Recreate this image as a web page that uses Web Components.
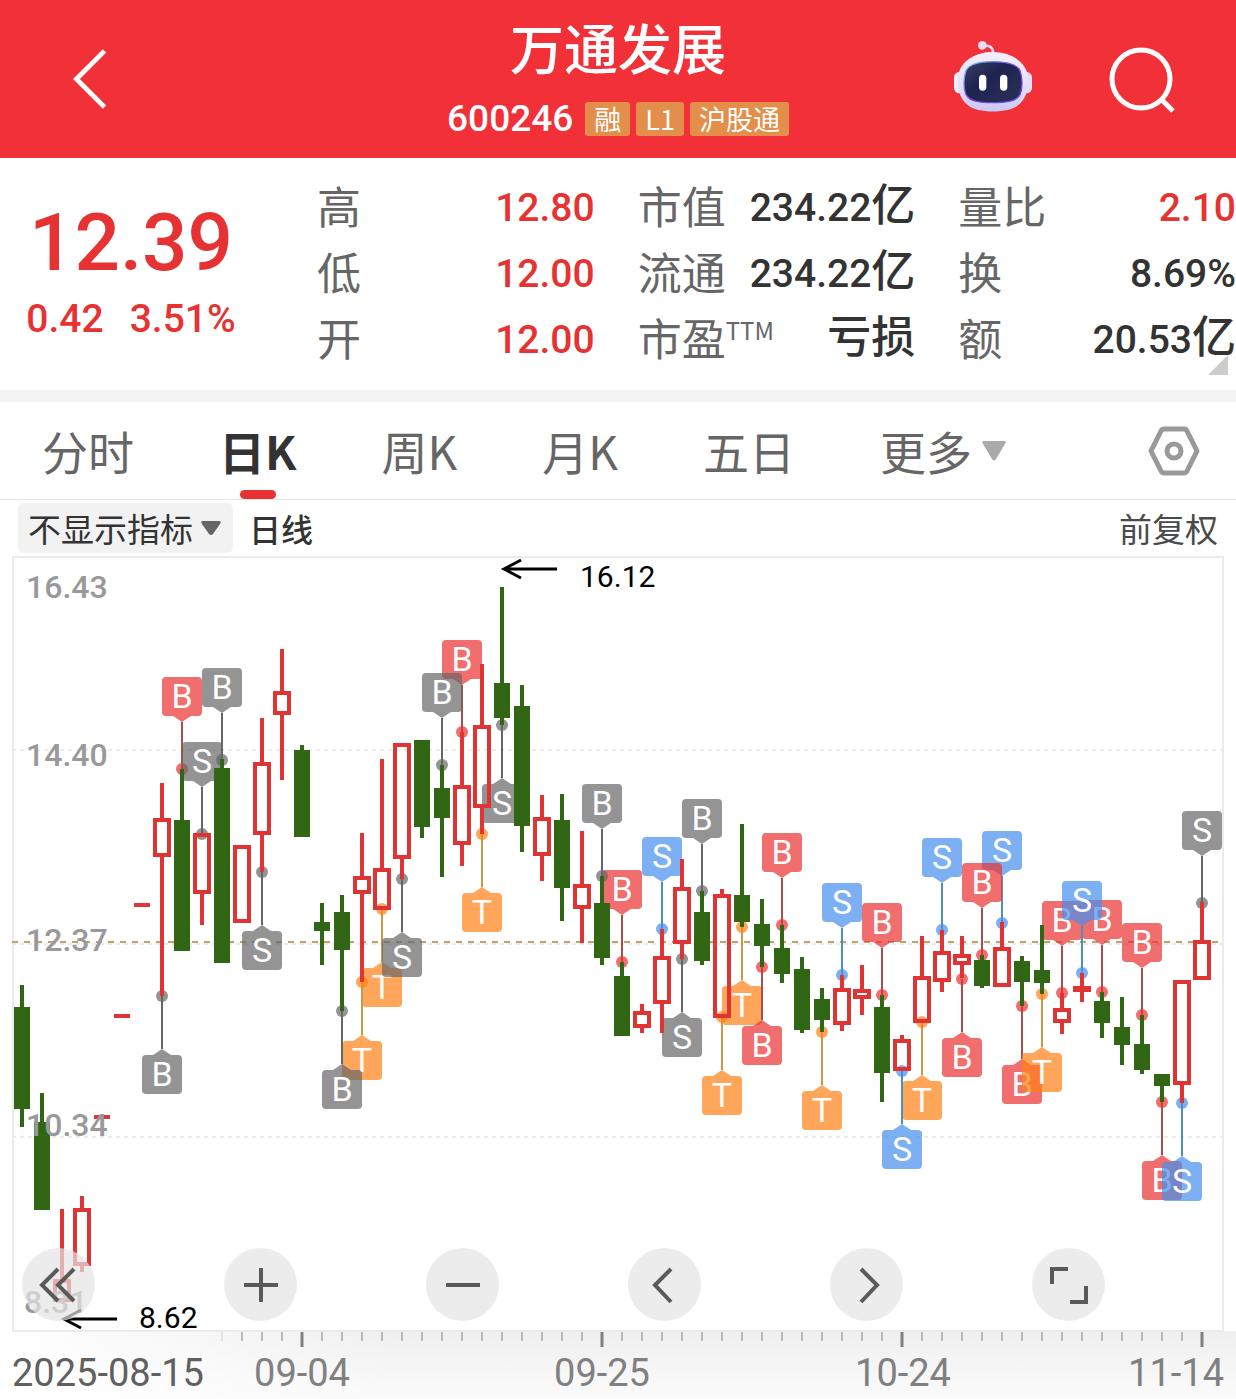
<!DOCTYPE html>
<html lang="zh-CN">
<head>
<meta charset="utf-8">
<meta name="viewport" content="width=device-width, initial-scale=1">
<title>万通发展 600246</title>
<style>
  body {
    margin: 0;
    background: #fff;
    color: #333;
    font-family: Roboto, "Noto Sans CJK SC", sans-serif;
    --up: #e63232;
    --label: #666;
    --num: Roboto, "Noto Sans CJK SC", sans-serif;
    --cjk: "Noto Sans CJK SC", sans-serif;
  }
</style>
</head>
<body>
<my-stock-app></my-stock-app>

<script>
/**
 * Creates a template element from markup.
 *
 * @param {string} html - The markup.
 * @returns {HTMLTemplateElement} The template.
 */
const createTemplate = html => {
  const template = document.createElement('template')
  template.innerHTML = html
  return template
}

/**
 * Base class that attaches an open shadow root with a cloned template.
 */
class BaseElement extends HTMLElement {
  /**
   * Creates an instance and fills the shadow root.
   */
  constructor () {
    super()
    this.attachShadow({ mode: 'open' })
    this.shadowRoot.appendChild(this.constructor.template.content.cloneNode(true))
  }
}

// ---- Small coloured tag beside the stock code ----
customElements.define('stock-tag', class extends BaseElement {
  static template = createTemplate(`
<style>
  :host {
    display: block;
    padding: 0 9px;
    border-radius: 3px;
    background: #e38e4a;
    color: #fff;
    font: 27px/34px var(--cjk);
  }
</style>
<slot></slot>
`)
})

// ---- Red top bar ----
customElements.define('stock-header', class extends BaseElement {
  static template = createTemplate(`
<style>
  :host {
    display: grid;
    grid-template-columns: 1fr auto 1fr;
    align-items: center;
    height: 158px;
    padding: 0 60px;
    background: #f23038;
    color: #fff;
  }
  button {
    display: block;
    padding: 0;
    border: 0;
    background: none;
    color: inherit;
  }
  svg { display: block; }
  .back { padding-left: 10px; }
  .middle { text-align: center; }
  h1 {
    margin: 0;
    font: 500 54px/78px var(--cjk);
  }
  .code {
    display: flex;
    align-items: center;
    justify-content: center;
    gap: 6px;
    padding: 16px 0 14px;
  }
  .code b {
    margin-right: 6px;
    font: 500 37px/34px Roboto, sans-serif;
  }
  .actions {
    display: flex;
    align-items: center;
    justify-content: flex-end;
    gap: 76px;
  }
  .robot { padding-bottom: 4px; }
</style>
<button class="back" aria-label="返回">
  <svg width="40" height="62" viewBox="0 0 40 64" fill="none" stroke="#fff" stroke-width="5"><path d="M35 3 6 32 35 61"/></svg>
</button>
<div class="middle">
  <h1><slot name="name"></slot></h1>
  <div class="code"><b><slot name="code"></slot></b><slot name="tags"></slot></div>
</div>
<div class="actions">
  <button class="robot" aria-label="助手">
    <svg width="78" height="74" viewBox="42 30 234 222">
      <defs>
        <linearGradient id="shell" x1="0" y1="0" x2="0" y2="1"><stop offset="0" stop-color="#f6effc"/><stop offset=".65" stop-color="#e2dcf8"/><stop offset="1" stop-color="#c9c6f0"/></linearGradient>
        <linearGradient id="rim" x1="0" y1="0" x2="1" y2="1"><stop offset="0" stop-color="#6fd0ea"/><stop offset=".5" stop-color="#7a3fe0"/><stop offset="1" stop-color="#5a50e8"/></linearGradient>
        <linearGradient id="face" x1="0" y1="0" x2="1" y2="1"><stop offset="0" stop-color="#3a3f66"/><stop offset=".4" stop-color="#1d2450"/><stop offset="1" stop-color="#2b3058"/></linearGradient>
      </defs>
      <path d="M132 47Q158 44 160 70" fill="none" stroke="#e6d8f4" stroke-width="8"/>
      <circle cx="127" cy="46" r="13" fill="#f0dcf2"/>
      <rect x="42" y="126" width="40" height="64" rx="16" fill="#f2f0ff"/>
      <rect x="236" y="126" width="40" height="64" rx="16" fill="#e4dcfa"/>
      <path d="M158 66C108 66 70 90 58 124 48 160 54 202 84 226 110 251 208 251 234 226 264 202 270 160 260 124 248 90 208 66 158 66Z" fill="url(#shell)"/>
      <path d="M158 95C116 95 88 102 78 122 70 144 70 176 78 194 90 216 124 218 158 218S228 216 240 194C248 176 248 144 240 122 230 102 200 95 158 95Z" fill="url(#face)" stroke="url(#rim)" stroke-width="4"/>
      <rect x="117" y="134" width="22" height="48" rx="11" fill="#fff"/>
      <rect x="180" y="134" width="22" height="48" rx="11" fill="#fff"/>
    </svg>
  </button>
  <button aria-label="搜索">
    <svg width="68" height="68" viewBox="0 0 68 68" fill="none" stroke="#fff" stroke-width="5"><circle cx="33" cy="34" r="29"/><path d="M53 54 65 66"/></svg>
  </button>
</div>
`)
})

// ---- Label and value pair ----
customElements.define('stat-item', class extends BaseElement {
  static template = createTemplate(`
<style>
  :host {
    display: flex;
    justify-content: space-between;
    height: 66px;
    white-space: nowrap;
  }
  .label { color: var(--label); font: 44px/60px var(--cjk); }
  .value { font: 500 39px/66px var(--num); }
  :host([up]) .value { color: var(--up); }
  ::slotted(sup) { font-size: 24px; line-height: 0; vertical-align: 16px; }
  ::slotted(i) { font: 500 44px/1px var(--cjk); }
</style>
<span class="label"><slot name="label"></slot></span>
<span class="value"><slot></slot></span>
`)
})

// ---- Price and key figures ----
customElements.define('stock-quote', class extends BaseElement {
  static template = createTemplate(`
<style>
  :host {
    position: relative;
    display: grid;
    grid-template-columns: 262px 1fr;
    gap: 55px;
    padding: 17px 0;
    border-bottom: 12px solid #f4f4f4;
  }
  .price {
    padding-top: 22px;
    color: var(--up);
    font-family: var(--num);
    font-weight: 500;
    text-align: center;
  }
  .last { font-size: 80px; line-height: 92px; }
  .change {
    display: flex;
    justify-content: center;
    gap: 26px;
    font-size: 39px;
    line-height: 60px;
  }
  .stats {
    display: grid;
    grid-template-columns: repeat(3, 1fr);
    column-gap: 43px;
  }
  .corner {
    position: absolute;
    right: 8px;
    bottom: 15px;
    width: 20px;
    height: 20px;
    background: #ccc;
    clip-path: polygon(100% 0, 100% 100%, 0 100%);
  }
</style>
<div class="price">
  <div class="last">12.39</div>
  <div class="change"><span>0.42</span><span>3.51%</span></div>
</div>
<div class="stats">
  <stat-item up><span slot="label">高</span>12.80</stat-item>
  <stat-item><span slot="label">市值</span>234.22<i>亿</i></stat-item>
  <stat-item up><span slot="label">量比</span>2.10</stat-item>
  <stat-item up><span slot="label">低</span>12.00</stat-item>
  <stat-item><span slot="label">流通</span>234.22<i>亿</i></stat-item>
  <stat-item><span slot="label">换</span>8.69%</stat-item>
  <stat-item up><span slot="label">开</span>12.00</stat-item>
  <stat-item><span slot="label">市盈</span><sup slot="label">TTM</sup><i>亏损</i></stat-item>
  <stat-item><span slot="label">额</span>20.53<i>亿</i></stat-item>
</div>
<span class="corner"></span>
`)
})

// ---- Period tabs ----
customElements.define('period-tabs', class extends BaseElement {
  static template = createTemplate(`
<style>
  :host {
    display: flex;
    align-items: center;
    gap: 85px;
    height: 97px;
    padding: 0 36px 0 42px;
    border-bottom: 1px solid #e6e6e6;
  }
  button {
    position: relative;
    display: flex;
    align-items: center;
    gap: 10px;
    height: 97px;
    padding: 0;
    border: 0;
    background: none;
    color: var(--label);
    font: 46px/97px var(--cjk);
    white-space: nowrap;
  }
  button.active { color: #333; font-weight: 700; }
  button.active::after {
    content: "";
    position: absolute;
    left: 50%;
    bottom: 0;
    width: 36px;
    height: 9px;
    margin-left: -18px;
    border-radius: 5px;
    background: var(--up);
  }
  .settings { margin-left: auto; }
</style>
<button>分时</button>
<button class="active">日K</button>
<button>周K</button>
<button>月K</button>
<button>五日</button>
<button aria-haspopup="true">更多<svg width="24" height="20" viewBox="0 0 24 20"><path d="M2 0H22Q25 0 23 3L14 18Q12 21 10 18L1 3Q-1 0 2 0Z" fill="#aaa"/></svg></button>
<button class="settings" aria-label="设置">
  <svg width="52" height="50" viewBox="0 0 52 50" fill="none" stroke="#999" stroke-width="5" stroke-linejoin="round"><path d="M16 3H36Q38 3 39 5L49 25 39 45Q38 47 36 47H16Q14 47 13 45L3 25 13 5Q14 3 16 3Z"/><circle cx="26" cy="25" r="7"/></svg>
</button>
`)
})

// ---- Indicator selection ----
customElements.define('indicator-bar', class extends BaseElement {
  static template = createTemplate(`
<style>
  :host {
    display: flex;
    align-items: center;
    gap: 16px;
    padding: 3px 18px;
    font-family: var(--cjk);
  }
  label { position: relative; display: block; }
  select {
    display: block;
    width: 215px;
    height: 50px;
    padding: 0 10px;
    border: 0;
    border-radius: 6px;
    background: #f2f2f2;
    color: #333;
    font: 33px/50px var(--cjk);
    appearance: none;
  }
  label svg {
    position: absolute;
    right: 12px;
    top: 18px;
    pointer-events: none;
  }
  b { font: 500 32px/50px var(--cjk); }
  .adjust {
    margin-left: auto;
    padding: 0;
    border: 0;
    background: none;
    color: #4a4a4a;
    font: 33px/50px var(--cjk);
  }
</style>
<label>
  <select aria-label="指标"><option>不显示指标</option></select>
  <svg width="20" height="14" viewBox="0 0 20 14"><path d="M2 0H18Q21 0 19 3L12 13Q10 15 8 13L1 3Q-1 0 2 0Z" fill="#666"/></svg>
</label>
<b>日线</b>
<button class="adjust">前复权</button>
`)
})

// Candles as [direction, high, body top, body bottom, low].
const candles = [
  ['d', 985, 1007, 1109, 1127], ['d', 1093, 1122, 1210, 1210], ['u', 1209, 1279, 1302, 1302],
  ['u', 1196, 1208, 1266, 1272], ['-', 1115, 1115, 1119, 1119], ['-', 1014, 1014, 1018, 1018],
  ['-', 903, 903, 907, 907], ['u', 783, 818, 857, 996], ['d', 769, 820, 951, 951],
  ['u', 833, 833, 894, 925], ['d', 759, 768, 963, 963], ['u', 845, 845, 923, 923],
  ['u', 718, 762, 835, 872], ['u', 649, 691, 715, 780], ['d', 745, 750, 837, 837],
  ['d', 903, 922, 931, 965], ['d', 895, 912, 950, 1011], ['u', 833, 876, 894, 982],
  ['u', 759, 868, 910, 910], ['u', 743, 743, 859, 879], ['d', 740, 740, 827, 838],
  ['d', 765, 788, 818, 877], ['u', 732, 785, 845, 866], ['u', 664, 725, 808, 834],
  ['d', 587, 683, 718, 725], ['d', 685, 706, 826, 852], ['u', 795, 817, 856, 881],
  ['d', 794, 820, 888, 921], ['u', 831, 884, 909, 943], ['d', 876, 903, 958, 965],
  ['d', 962, 976, 1036, 1036], ['u', 1004, 1011, 1028, 1033], ['u', 929, 956, 1004, 1033],
  ['u', 859, 887, 944, 959], ['d', 891, 912, 961, 965], ['u', 889, 894, 1018, 1018],
  ['d', 824, 895, 922, 927], ['d', 899, 924, 946, 967], ['d', 925, 948, 974, 983],
  ['d', 957, 969, 1030, 1033], ['d', 988, 999, 1020, 1032], ['u', 975, 988, 1025, 1031],
  ['u', 965, 989, 999, 1015], ['d', 995, 1007, 1073, 1102], ['u', 1035, 1039, 1071, 1071],
  ['u', 936, 976, 1023, 1023], ['u', 930, 951, 982, 992], ['u', 936, 954, 965, 978],
  ['d', 955, 960, 986, 988], ['u', 922, 947, 987, 987], ['d', 956, 961, 982, 1006],
  ['d', 925, 970, 983, 994], ['u', 993, 1008, 1023, 1034], ['u', 973, 986, 992, 1002],
  ['d', 992, 1001, 1023, 1038], ['d', 997, 1027, 1045, 1065], ['d', 1015, 1044, 1070, 1074],
  ['d', 1074, 1074, 1086, 1102], ['u', 980, 980, 1085, 1103], ['u', 902, 940, 980, 980]
]

// Trade marks as [candle index, letter, colour, dot y, side]. Later ones lie on top.
const marks = [
  [36, 'T', 'orange', 927, 'below'],
  [8, 'B', 'red', 769, 'above'], [22, 'B', 'red', 732, 'above'], [30, 'B', 'red', 962, 'above'],
  [37, 'B', 'red', 967, 'below'], [38, 'B', 'red', 925, 'above'], [43, 'B', 'red', 995, 'above'],
  [47, 'B', 'red', 979, 'below'], [50, 'B', 'red', 1006, 'below'], [52, 'B', 'red', 993, 'above'],
  [54, 'B', 'red', 992, 'above'], [56, 'B', 'red', 1015, 'above'], [57, 'B', 'red', 1102, 'below'],
  [18, 'T', 'orange', 909, 'below'], [17, 'T', 'orange', 982, 'below'], [23, 'T', 'orange', 834, 'below'],
  [35, 'T', 'orange', 1017, 'below'], [40, 'T', 'orange', 1032, 'below'], [45, 'T', 'orange', 1022, 'below'],
  [51, 'T', 'orange', 994, 'below'],
  [32, 'S', 'blue', 929, 'above'], [41, 'S', 'blue', 975, 'above'], [44, 'S', 'blue', 1071, 'below'],
  [46, 'S', 'blue', 930, 'above'], [49, 'S', 'blue', 923, 'above'], [53, 'S', 'blue', 973, 'above'],
  [58, 'S', 'blue', 1103, 'below'],
  [48, 'B', 'red', 955, 'above'],
  [7, 'B', 'gray', 996, 'below'], [9, 'S', 'gray', 834, 'above'], [10, 'B', 'gray', 760, 'above'],
  [12, 'S', 'gray', 872, 'below'], [16, 'B', 'gray', 1011, 'below'], [19, 'S', 'gray', 879, 'below'],
  [21, 'B', 'gray', 765, 'above'], [24, 'S', 'gray', 725, 'below'], [29, 'B', 'gray', 876, 'above'],
  [33, 'S', 'gray', 959, 'below'], [34, 'B', 'gray', 891, 'above'], [59, 'S', 'gray', 903, 'above']
]

const candleX = i => 22 + i * 20

/**
 * Draws one candle.
 *
 * @param {Array} candle - The candle.
 * @param {number} i - The index.
 * @returns {string} SVG markup.
 */
const drawCandle = ([dir, high, top, bottom, low], i) => {
  const x = candleX(i)
  if (dir === '-') {
    return `<rect class="up-fill" x="${x - 8}" y="${top}" width="16" height="4"/>`
  }
  if (dir === 'd') {
    return `<g class="down"><rect x="${x - 2}" y="${high}" width="4" height="${low - high}"/><rect x="${x - 8}" y="${top}" width="16" height="${bottom - top}"/></g>`
  }
  return `<path class="up" d="M${x} ${high}V${top}M${x} ${bottom}V${low}M${x - 7} ${top + 2}H${x + 7}V${bottom - 2}H${x - 7}Z"/>`
}

/**
 * Draws one trade mark: dot, stem, pointed badge and letter.
 *
 * @param {Array} mark - The mark.
 * @returns {string} SVG markup.
 */
const drawMark = ([i, letter, color, y, side]) => {
  const x = candleX(i)
  const above = side === 'above'
  const top = above ? y - 92 : y + 59
  const edge = above ? top + 39 : top
  const tip = above ? edge + 6 : edge - 6
  return `<g class="${color}">
    <path class="stem" d="M${x} ${y}V${tip}"/>
    <circle cx="${x}" cy="${y}" r="6"/>
    <rect x="${x - 20}" y="${top}" width="40" height="39" rx="4"/>
    <path class="tip" d="M${x - 9} ${edge}L${x} ${tip} ${x + 9} ${edge}Z"/>
    <text x="${x}" y="${top + 31}">${letter}</text>
  </g>`
}

/**
 * Draws the date ruler ticks.
 *
 * @returns {string} SVG markup.
 */
const drawTicks = () => {
  let out = ''
  for (let i = 10; i < 60; i++) {
    const major = (i - 14) % 15 === 0
    out += `<path d="M${candleX(i)} 1332v${major ? 15 : 9}" stroke="${i === 10 ? '#ccc' : '#808080'}" stroke-width="${major ? 3 : 1}"/>`
  }
  return out
}

// ---- Candlestick chart ----
customElements.define('k-line-chart', class extends BaseElement {
  static template = createTemplate(`
<style>
  :host { display: block; position: relative; }
  svg { display: block; width: 100%; height: auto; }
  .frame { fill: none; stroke: #ebebeb; stroke-width: 2; }
  .grid { stroke: #ebebeb; stroke-width: 2; stroke-dasharray: 4 4; }
  .current { stroke: #bfa36a; stroke-width: 2; stroke-dasharray: 6 6; }
  .down { fill: #306614; }
  .up { fill: none; stroke: #e03434; stroke-width: 4; }
  .up-fill { fill: #dc3636; }
  .stem { stroke-width: 2; }
  .marks circle, .marks rect, .marks .tip { fill-opacity: .7; }
  .red { fill: #ea3030; } .red .stem { stroke: #a05050; }
  .gray { fill: #666; } .gray .stem { stroke: #666; }
  .blue { fill: #448eec; } .blue .stem { stroke: #5090b0; }
  .orange { fill: #ff8016; } .orange .stem { stroke: #c89a48; }
  .marks text { fill: #fff; font: 34px Roboto, sans-serif; text-anchor: middle; }
  .scale { fill: #999; font: 500 32px var(--num); }
  .extreme text { font: 30px Roboto, sans-serif; }
  .extreme path { fill: none; stroke: #000; stroke-width: 3; }
  .dates { fill: #808080; font: 38px Roboto, sans-serif; }
  .toolbar {
    position: absolute;
    left: 22px;
    right: 2px;
    bottom: 78px;
    display: grid;
    grid-template-columns: repeat(6, 1fr);
  }
  .toolbar button {
    display: grid;
    place-items: center;
    width: 73px;
    height: 73px;
    padding: 0;
    border: 0;
    border-radius: 50%;
    background: rgba(228, 228, 228, .7);
  }
  .toolbar svg {
    width: 40px;
    height: 40px;
    fill: none;
    stroke: #5a5a5a;
    stroke-width: 4;
  }
</style>
<svg viewBox="0 556 1236 843" role="img" aria-label="日K线图">
  <defs>
    <linearGradient id="ruler" x1="0" y1="0" x2="0" y2="1"><stop offset="0" stop-color="#efefef"/><stop offset="1" stop-color="#fbfbfb"/></linearGradient>
    <linearGradient id="fade" x1="0" y1="0" x2="1" y2="0"><stop offset="0" stop-color="#fff"/><stop offset="1" stop-color="#fff" stop-opacity="0"/></linearGradient>
  </defs>
  <rect x="0" y="1331" width="1236" height="68" fill="url(#ruler)"/>
  <rect x="0" y="1331" width="400" height="68" fill="url(#fade)"/>
  <rect class="frame" x="13" y="557" width="1210" height="774"/>
  <path class="grid" d="M12 750H1224M12 944H1224M12 1137H1224"/>
  <path class="current" d="M12 942H1224"/>
  <g class="marks">${marks.map(drawMark).join('')}</g>
  <g>${candles.map(drawCandle).join('')}</g>
  <g class="scale">
    <text x="26" y="598">16.43</text>
    <text x="26" y="766">14.40</text>
    <text x="26" y="951">12.37</text>
    <text x="26" y="1136">10.34</text>
    <text x="24" y="1313">8.31</text>
  </g>
  <g class="extreme">
    <path d="M557 569H504M521 560 504 569 521 578"/>
    <text x="580" y="587">16.12</text>
    <path d="M117 1319H64M81 1310 64 1319 81 1328"/>
    <text x="139" y="1328">8.62</text>
  </g>
  ${drawTicks()}
  <g class="dates">
    <text x="12" y="1386" fill="#606060">2025-08-15</text>
    <text x="302" y="1386" text-anchor="middle">09-04</text>
    <text x="602" y="1386" text-anchor="middle">09-25</text>
    <text x="903" y="1386" text-anchor="middle">10-24</text>
    <text x="1224" y="1386" text-anchor="end">11-14</text>
  </g>
</svg>
<div class="toolbar">
  <button aria-label="最早"><svg viewBox="0 0 40 40"><path d="M19 4 3 20 19 36M35 4 19 20 35 36"/></svg></button>
  <button aria-label="放大"><svg viewBox="0 0 40 40"><path d="M3 20H37M20 3V37"/></svg></button>
  <button aria-label="缩小"><svg viewBox="0 0 40 40"><path d="M3 20H37"/></svg></button>
  <button aria-label="左移"><svg viewBox="0 0 40 40"><path d="M26 4 10 20 26 37"/></svg></button>
  <button aria-label="右移"><svg viewBox="0 0 40 40"><path d="M14 4 30 20 14 37"/></svg></button>
  <button aria-label="全屏"><svg viewBox="0 0 40 40"><path d="M19 4H3V19M21 37H37V21"/></svg></button>
</div>
`)
})

// ---- Whole page ----
customElements.define('my-stock-app', class extends BaseElement {
  static template = createTemplate(`
<style>
  :host { display: block; }
</style>
<stock-header>
  <span slot="name">万通发展</span>
  <span slot="code">600246</span>
  <stock-tag slot="tags">融</stock-tag>
  <stock-tag slot="tags">L1</stock-tag>
  <stock-tag slot="tags">沪股通</stock-tag>
</stock-header>
<stock-quote></stock-quote>
<period-tabs></period-tabs>
<indicator-bar></indicator-bar>
<k-line-chart></k-line-chart>
`)
})
</script>
</body>
</html>
